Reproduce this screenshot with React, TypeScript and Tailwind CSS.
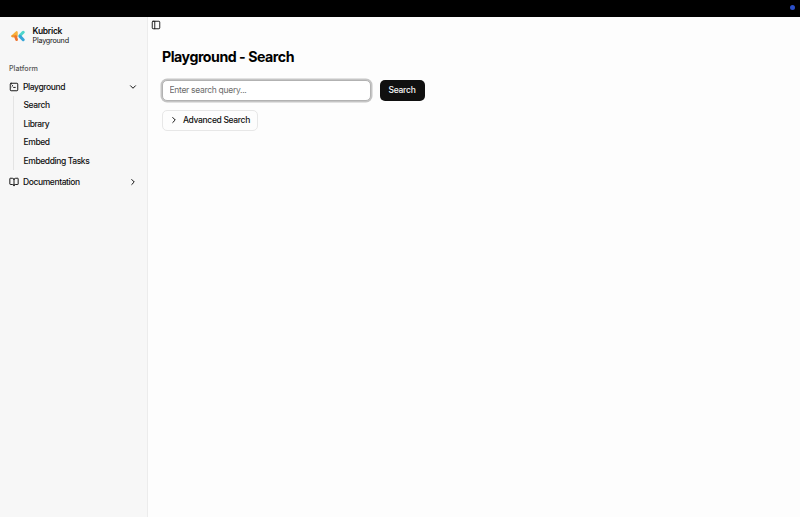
import React from "react";
import { BookOpen, ChevronDown, ChevronRight, PanelLeft, SquareTerminal } from "lucide-react";

const links = ["Search", "Library", "Embed", "Embedding Tasks"];

function Logo() {
  return (
    <svg width="14" height="12" viewBox="0 0 14 12" fill="none" strokeLinecap="round">
      <path d="M1.5 6 5.6 2.3v3.9Z" fill="#f8b13b" stroke="#f8b13b" strokeWidth="2.3" strokeLinejoin="round" />
      <path d="M1.5 6.2h2.8" stroke="#f2982e" strokeWidth="2.3" />
      <path d="M4.6 6.8 5.6 9.6" stroke="#ee7431" strokeWidth="2.8" />
      <path d="M9 5.5 12.2 2.3" stroke="#4fd6cb" strokeWidth="3" />
      <path d="M9 6.4 12.2 9.7" stroke="#36a5d8" strokeWidth="3" />
    </svg>
  );
}

function Sidebar() {
  return (
    <aside className="w-[148px] shrink-0 border-r border-[#ececec] bg-[#f7f7f7] px-[9px] pt-[9px]">
      <div className="flex h-5 items-center pl-[2px]">
        <Logo />
        <div className="ml-[7.5px]">
          <div className="text-[8.5px] font-semibold leading-[10px] tracking-[-0.3px]">Kubrick</div>
          <div className="text-[7.2px] leading-[10px] tracking-[-0.2px]">Playground</div>
        </div>
      </div>
      <div className="mt-[17.5px] h-[10px] text-[7.2px] font-medium leading-[10px] text-[#555555]">Platform</div>
      <nav className="mt-[3.5px] text-[8.5px] font-[450] leading-[10px] tracking-[-0.4px]">
        <div className="flex h-[19px] items-center">
          <SquareTerminal size={10} strokeWidth={2.3} />
          <span className="ml-[4px] flex-1">Playground</span>
          <ChevronDown size={10} strokeWidth={2.4} />
        </div>
        <div className="ml-[4px] border-l border-[#e4e4e4] pl-[9.5px]">
          {links.map((label) => (
            <div key={label} className="flex h-[18.5px] items-center">{label}</div>
          ))}
        </div>
        <div className="mt-[1.5px] flex h-[20px] items-center">
          <BookOpen size={10} strokeWidth={2.3} />
          <span className="ml-[4px] flex-1">Documentation</span>
          <ChevronRight size={10} strokeWidth={2.4} />
        </div>
      </nav>
    </aside>
  );
}

export default function App() {
  return (
    <div className="flex h-[517px] w-[800px] flex-col overflow-hidden bg-[#fdfdfd] font-['Inter','Liberation_Sans',sans-serif] text-[#101010]">
      <header className="flex h-[17px] shrink-0 items-start justify-end bg-black pr-[5px] pt-[5px]">
        <div className="size-[5px] rounded-full bg-[#2b4fc8]" />
      </header>
      <div className="flex min-h-0 flex-1">
        <Sidebar />
        <main className="flex-1 pl-[14px]">
          <div className="-ml-[11px] pt-[3px]">
            <PanelLeft size={10} strokeWidth={2.2} />
          </div>
          <h1 className="mt-[17px] h-5 text-[14.2px] font-bold leading-5 tracking-[-0.48px] text-black">Playground - Search</h1>
          <div className="mt-[12.5px] flex items-center gap-[9px]">
            <input
              className="h-[21px] w-[208.5px] rounded-[5px] border border-[#b2b2b2] bg-white px-[6.5px] text-[8.5px] tracking-[-0.3px] outline-none ring-[1.5px] ring-[#c5c5c5] placeholder:text-[#6b6b6b]"
              placeholder="Enter search query..."
            />
            <button className="h-[21px] w-[45px] rounded-[5px] bg-[#101010] text-[8.5px] font-medium tracking-[-0.25px] text-[#fafafa]">Search</button>
          </div>
          <button className="mt-[9px] flex h-[21px] w-[95.5px] items-center rounded-[5px] border border-[#e7e7e7] bg-[#fdfdfd] pl-[6px] text-[8.5px] font-medium tracking-[-0.34px]">
            <ChevronRight size={10} strokeWidth={2.4} />
            <span className="ml-[4px]">Advanced Search</span>
          </button>
        </main>
      </div>
    </div>
  );
}
